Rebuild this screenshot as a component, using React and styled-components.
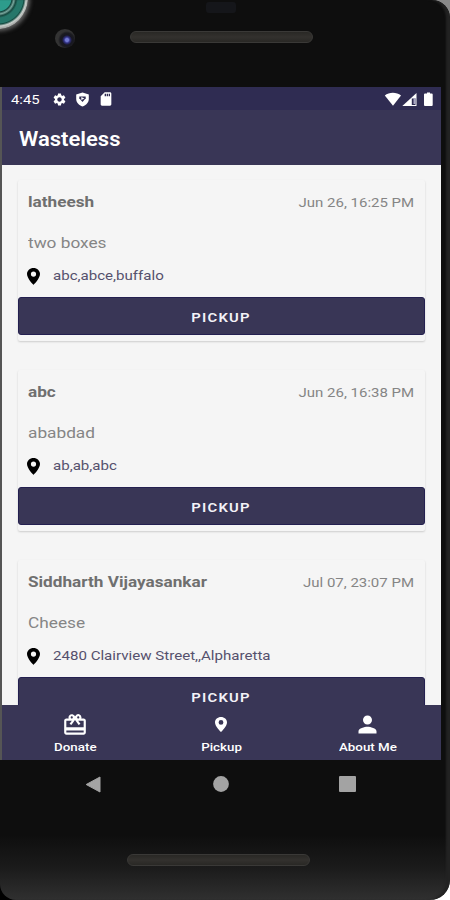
import React from "react";
import styled, { createGlobalStyle } from "styled-components";
import { MdSettings, MdSdCard, MdCardGiftcard, MdPerson } from "react-icons/md";

const donations = [
  {
    name: "latheesh",
    date: "Jun 26, 16:25 PM",
    item: "two boxes",
    address: "abc,abce,buffalo",
  },
  {
    name: "abc",
    date: "Jun 26, 16:38 PM",
    item: "ababdad",
    address: "ab,ab,abc",
  },
  {
    name: "Siddharth Vijayasankar",
    date: "Jul 07, 23:07 PM",
    item: "Cheese",
    address: "2480 Clairview Street,,Alpharetta",
  },
];

const PinIcon = ({ width, height }) => (
  <svg
    width={width}
    height={height}
    viewBox="0 0 13 17"
    preserveAspectRatio="none"
  >
    <path
      fillRule="evenodd"
      fill="currentColor"
      d="M6.500 0C2.900 0 0 2.700 0 6.100 0 10.600 6.500 17 6.500 17S13 10.600 13 6.100C13 2.700 10.100 0 6.500 0zm0 3.500a2.600 2.600 0 1 1 0 5.200 2.600 2.600 0 0 1 0-5.200z"
    />
  </svg>
);

const ShieldIcon = () => (
  <svg width="13" height="15" viewBox="0 0 13 15">
    <path
      d="M6.500 0.600 12.800 2.500V7c0 3.400-2.600 6.300-6.300 7.400C2.800 13.300.2 10.400.2 7V2.500z"
      fill="#fff"
    />
    <path d="M3.300 4.400h6.400v1.900L6.500 10 3.300 6.300z" fill="#2f2c52" />
    <path d="M5.300 5.100 8.400 6.500 5.300 8z" fill="#fff" />
  </svg>
);

const StatusIcons = () => (
  <svg width="50" height="15" viewBox="0 0 50 15">
    <path d="M.8 3.400C5-.1 12.700-.1 17 3.400L9 13.700z" fill="#fff" />
    <path d="M18.300 14 32.500 1v13z" fill="#fff" />
    <path d="M27.800 6.500h3.700v6.500h-3.700z" fill="#2f2c52" />
    <path d="M29.500 6h2v6h-2z" fill="#aaa8c4" />
    <path
      d="M41 1.600h2V.6h3v1h1.700q1 0 1 1V13q0 1-1 1H41q-1 0-1-1V2.600q0-1 1-1z"
      fill="#fff"
    />
  </svg>
);

//the card with all of its donation info and the pickup button
const DonationCard = ({ name, date, item, address }) => (
  <Card>
    <div className="head">
      <h2>{name}</h2>
      <time>{date}</time>
    </div>
    <p className="item">{item}</p>
    <div className="address">
      <PinIcon width={13} height={17} />
      <span>{address}</span>
    </div>
    <PickupButton>
      <span>PICKUP</span>
    </PickupButton>
  </Card>
);

const App = () => {
  return (
    <Backdrop>
      <GlobalStyle />
      <Phone>
        <TopBezel>
          <Ring />
          <Sensor />
          <Camera />
          <Speaker />
        </TopBezel>
        <Screen>
          <StatusBar>
            <span>4:45</span>
            <MdSettings className="gear" />
            <ShieldIcon />
            <MdSdCard className="sd" />
            <div className="right">
              <StatusIcons />
            </div>
          </StatusBar>
          <AppBar>
            <h1>Wasteless</h1>
          </AppBar>
          <List>
            {donations.map((donation) => (
              <DonationCard key={donation.name} {...donation} />
            ))}
          </List>
          <TabBar>
            <Tab $size={26}>
              <div>
                <MdCardGiftcard />
              </div>
              <span>Donate</span>
            </Tab>
            <Tab>
              <div>
                <PinIcon width={12} height={15} />
              </div>
              <span>Pickup</span>
            </Tab>
            <Tab $size={27}>
              <div>
                <MdPerson />
              </div>
              <span>About Me</span>
            </Tab>
          </TabBar>
        </Screen>
        <SystemNav>
          <svg width="16" height="17" viewBox="0 0 16 17">
            <path
              d="M15 1v15L1.200 8.500z"
              fill="#a3a3a3"
              stroke="#a3a3a3"
              strokeLinejoin="round"
            />
          </svg>
          <svg width="18" height="16" viewBox="0 0 18 16">
            <circle cx="10" cy="8" r="7.900" fill="#a3a3a3" />
          </svg>
          <svg width="17" height="16" viewBox="0 0 17 16">
            <rect width="17" height="16" rx="1" fill="#a3a3a3" />
          </svg>
        </SystemNav>
        <BottomBezel>
          <Speaker />
        </BottomBezel>
      </Phone>
    </Backdrop>
  );
};

const GlobalStyle = createGlobalStyle`
  * {
    box-sizing: border-box;
  }
  body {
    margin: 0;
    font-family: Roboto, "Liberation Sans", sans-serif;
  }
  h1, h2, p {
    margin: 0;
  }
`;

const Backdrop = styled.div`
  width: 450px;
  height: 900px;
  background:
    linear-gradient(#000, #000) 0 100% / 30px 30px no-repeat,
    linear-gradient(#8a8a8a, #8a8a8a) 100% 0 / 30px 30px no-repeat,
    #fff;
`;

const Phone = styled.div`
  width: 450px;
  height: 900px;
  display: flex;
  flex-direction: column;
  overflow: hidden;
  position: relative;
  background: linear-gradient(#0e0e0e 0 835px, #1b1b1b 868px, #303030 900px);
  border-radius: 0 18px 20px 16px;
  &::after {
    content: "";
    position: absolute;
    inset: 0;
    border-radius: inherit;
    box-shadow: inset -5px 0 2px -1px #222;
    pointer-events: none;
  }
`;

const TopBezel = styled.div`
  height: 87px;
  flex-shrink: 0;
  position: relative;
  padding: 31px 0 0 130px;
`;

const Ring = styled.div`
  position: absolute;
  left: -32px;
  top: -33px;
  width: 60px;
  height: 62px;
  border-radius: 50%;
  background: radial-gradient(
    circle,
    #2d9c8c 0 13px,
    #12443c 14px,
    #7aa69d 16px,
    #16483f 18px,
    #26776a 20px 25px,
    #134b41 26px,
    #c8cfcb 28px,
    #a9aba9 30px
  );
  box-shadow: 1px 1px 4px 1px #666;
`;

const Sensor = styled.div`
  position: absolute;
  left: 206px;
  top: 2px;
  width: 30px;
  height: 11px;
  border-radius: 3px;
  background: #15161a;
`;

const Camera = styled.div`
  position: absolute;
  left: 55px;
  top: 29px;
  width: 20px;
  height: 19px;
  border-radius: 50%;
  background: radial-gradient(
    circle at 12px 11px,
    #7279d3 0 1.5px,
    #303082 3px,
    #171721 5px,
    #1b1b20 7px,
    #333 9px
  );
`;

const Speaker = styled.div`
  width: 183px;
  height: 12px;
  border: 1px solid #3a3937;
  border-radius: 6px;
  background: linear-gradient(#292825, #33312e 50%, #292825);
`;

const Screen = styled.div`
  width: 439px;
  height: 673px;
  margin-left: 2px;
  flex-shrink: 0;
  display: flex;
  flex-direction: column;
  background: #f5f5f5;
  box-shadow: -2px 0 0 #555;
`;

const StatusBar = styled.div`
  height: 23px;
  flex-shrink: 0;
  display: flex;
  align-items: center;
  padding: 1px 7px 0 9px;
  color: #fff;
  background: #2f2c52;
  span {
    width: 41px;
    font-size: 13.5px;
    transform: scaleX(1.1);
    transform-origin: left;
  }
  .gear {
    width: 15px;
    height: 15px;
    margin-right: 9px;
  }
  .sd {
    width: 16px;
    height: 16px;
    margin-left: 9px;
  }
  .right {
    display: flex;
    margin-left: auto;
  }
`;

const AppBar = styled.header`
  height: 55px;
  flex-shrink: 0;
  padding-left: 17px;
  color: #fff;
  background: #393656;
  h1 {
    font-size: 20px;
    font-weight: 600;
    line-height: 59px;
    transform: scaleX(1.1);
    transform-origin: left;
  }
`;

const List = styled.main`
  flex: 1;
  min-height: 0;
  overflow: hidden;
  display: flex;
  flex-direction: column;
  gap: 29px;
  padding: 15px 16px 0;
`;

const Card = styled.article`
  height: 161px;
  flex-shrink: 0;
  display: flex;
  flex-direction: column;
  border-radius: 2px;
  background: #f5f5f5;
  box-shadow: 0 1px 2px rgba(0, 0, 0, 0.17);
  .head {
    display: flex;
    justify-content: space-between;
    padding: 12px 11px 0 10px;
    line-height: 20px;
  }
  h2 {
    color: #6f6f6f;
    font-size: 15px;
    font-weight: 700;
    transform: scaleX(1.145);
    transform-origin: left;
  }
  time {
    color: #858585;
    font-size: 13.5px;
    transform: scaleX(1.11);
    transform-origin: right;
  }
  .item {
    padding: 21px 0 0;
    margin-left: 10px;
    color: #858585;
    font-size: 15px;
    line-height: 20px;
    transform: scaleX(1.15);
    transform-origin: left;
  }
  .address {
    display: flex;
    align-items: center;
    gap: 13px;
    height: 20px;
    margin-top: 13px;
    padding-left: 9px;
    color: #55516d;
    font-size: 13px;
  }
  .address span {
    transform: scaleX(1.16);
    transform-origin: left;
    padding-bottom: 2px;
  }
  .address svg {
    color: #000;
  }
`;

const PickupButton = styled.button`
  height: 38px;
  margin-top: 11px;
  padding: 1px 0 0;
  border: 1px solid #242050;
  border-radius: 3px;
  color: #f3f2f7;
  background: #393656;
  font-family: inherit;
  font-size: 13.5px;
  font-weight: 600;
  letter-spacing: 1.1px;
  span {
    display: inline-block;
    transform: scaleX(1.1);
  }
`;

const TabBar = styled.nav`
  height: 55px;
  flex-shrink: 0;
  display: grid;
  grid-template-columns: repeat(3, 1fr);
  background: #393656;
`;

const Tab = styled.div`
  display: flex;
  flex-direction: column;
  align-items: center;
  padding-top: 6px;
  color: #fff;
  font-size: 11.5px;
  font-weight: 500;
  line-height: 18px;
  div {
    display: flex;
    align-items: center;
    height: 27px;
  }
  span {
    transform: scaleX(1.16);
  }
  ${(props) =>
    props.$size &&
    `svg {
      width: ${props.$size}px;
      height: ${props.$size}px;
    }`}
`;

const SystemNav = styled.div`
  height: 48px;
  flex-shrink: 0;
  display: flex;
  align-items: center;
  justify-content: space-between;
  padding: 0 94px 0 85px;
`;

const BottomBezel = styled.div`
  flex: 1;
  padding: 46px 0 0 127px;
`;

export default App;
